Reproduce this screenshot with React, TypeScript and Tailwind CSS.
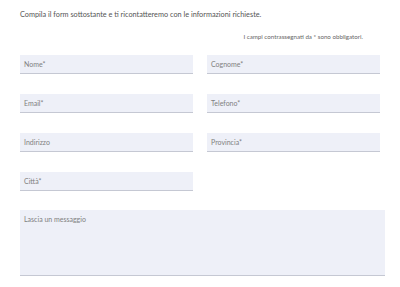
const fields = [
  { label: "Nome*" },
  { label: "Cognome*" },
  { label: "Email*" },
  { label: "Telefono*" },
  { label: "Indirizzo" },
  { label: "Provincia*" },
  { label: "Città*" },
];

export default function App() {
  return (
    <div
      className="w-[400px] h-[287px] bg-white overflow-hidden text-[#666]"
      style={{ fontFamily: "Lato, 'Open Sans', sans-serif" }}
    >
      <div className="pl-5 pr-[15px] pt-[10px]">
        <p className="text-[7.3px] leading-[10px] text-[#555]">
          Compila il form sottostante e ti ricontatteremo con le informazioni richieste.
        </p>
        <p className="mt-[13px] pr-[22px] text-right text-[6.2px] leading-[8px] text-[#666]">
          I campi contrassegnati da * sono obbligatori.
        </p>

        <div className="mt-[14px] grid w-[360px] grid-cols-2 gap-x-[14px] gap-y-[20px]">
          {fields.map((field) => (
            <div
              key={field.label}
              className="h-[19px] bg-[#eef0f8] border-b border-[#c5c8d3] pl-1 flex items-center"
            >
              <span className="text-[7px] text-[#808080]">{field.label}</span>
            </div>
          ))}
        </div>

        <div className="mt-[19px] h-[66px] w-[365px] bg-[#eef0f8] border-b border-[#c5c8d3] px-1 pt-[5px]">
          <span className="block text-[7px] leading-[8px] text-[#808080]">Lascia un messaggio</span>
        </div>
      </div>
    </div>
  );
}
